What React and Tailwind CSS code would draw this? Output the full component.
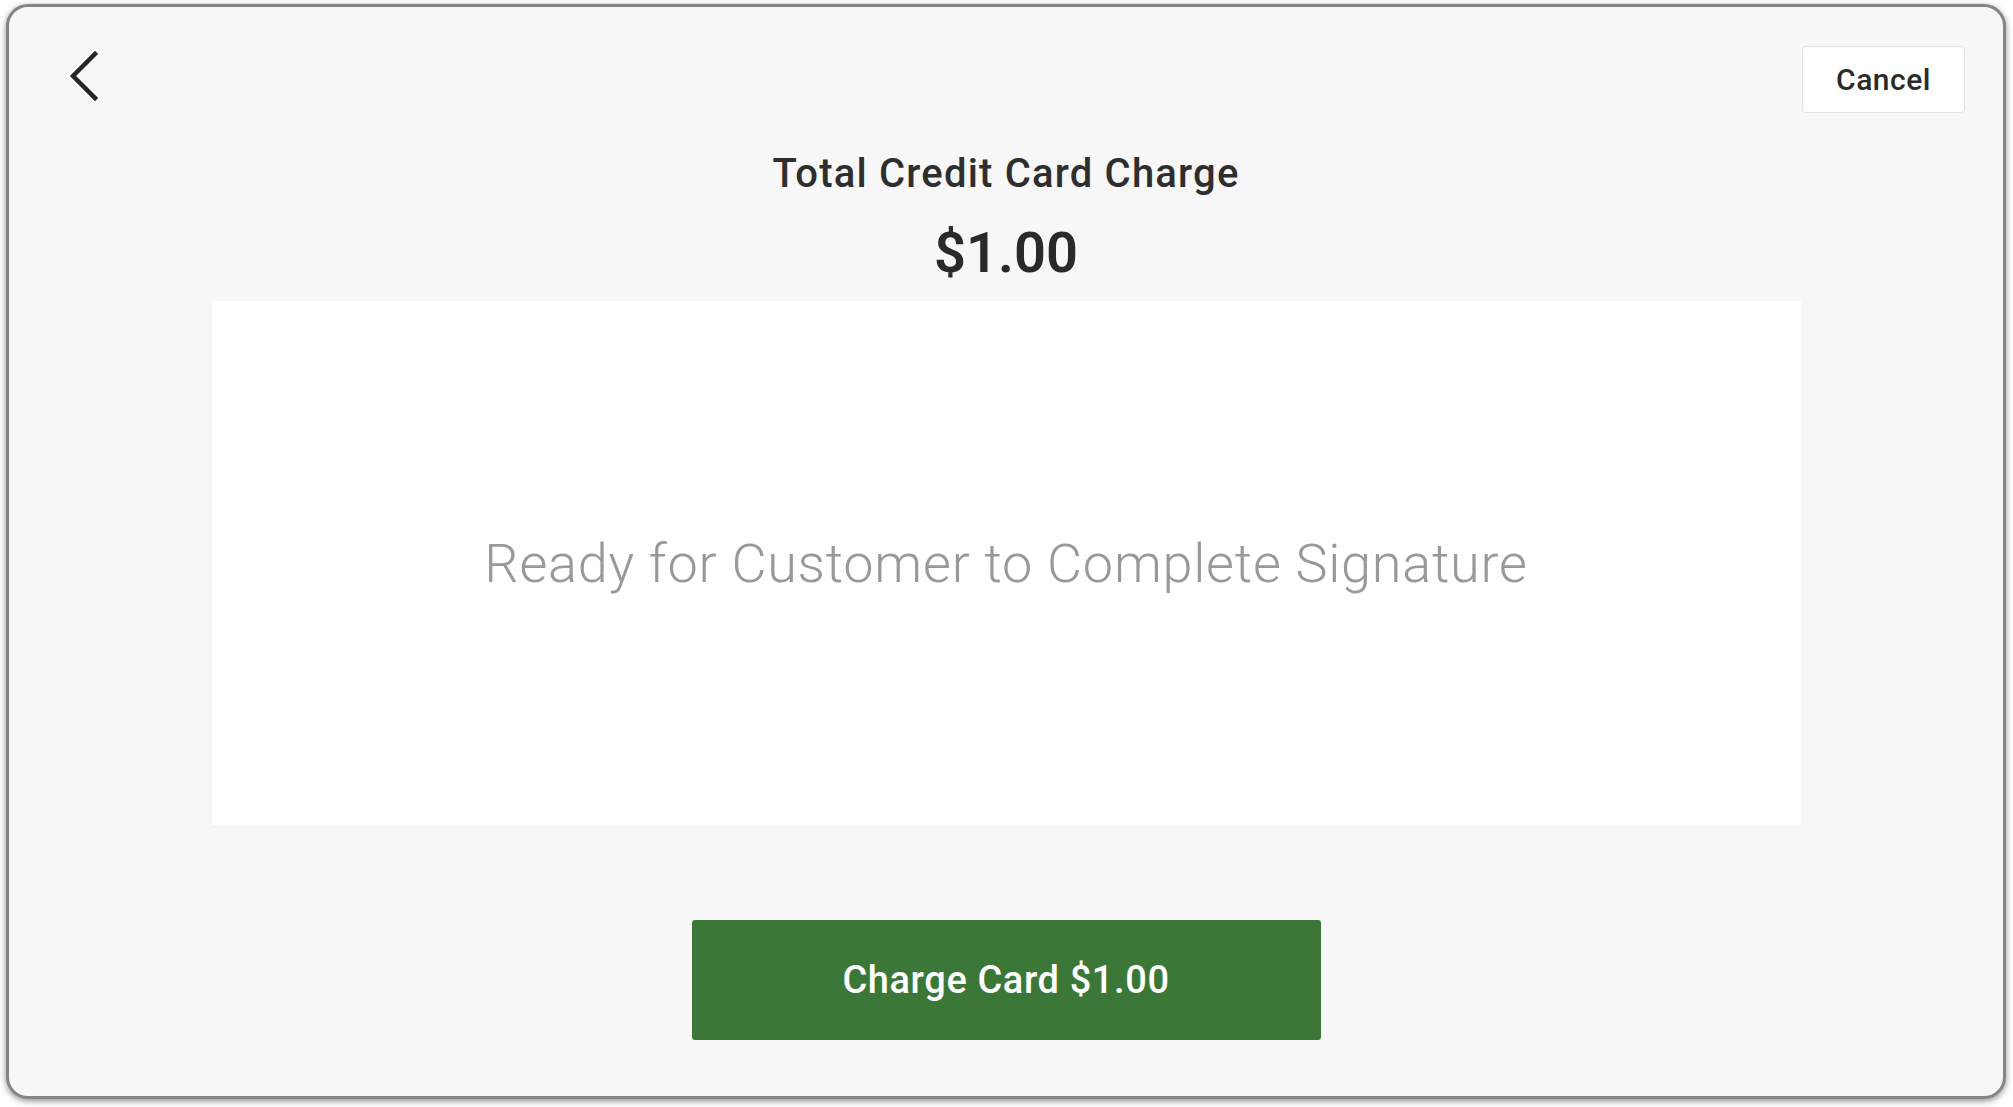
const font = { fontFamily: 'Roboto, "Noto Sans", sans-serif' };

const BackIcon = () => (
  <svg width="34" height="54" viewBox="0 0 34 54" fill="none">
    <path d="M29 4 L7 26 L29 48" stroke="#262626" strokeWidth="4.5" strokeLinecap="square" strokeLinejoin="miter" />
  </svg>
);

const App = () => {
  return (
    <div className="w-[2013px] h-[1107px] bg-white pl-[6px] pt-[4px]" style={font}>
      {/* window frame */}
      <div className="w-[2000px] h-[1095px] rounded-[22px] border-[3px] border-[#858585] bg-[#f7f7f7] shadow-[0_2px_6px_rgba(0,0,0,0.45)] flex flex-col items-center overflow-hidden">
        {/* header */}
        <div className="w-full flex justify-between items-start pl-[57px] pr-[38px] pt-[39px]">
          <button className="mt-[4px]">
            <BackIcon />
          </button>
          <button className="w-[163px] h-[67px] bg-white border border-[#e3e3e3] rounded-[4px] text-[30px] tracking-[0.5px] font-medium text-[#2b2b2b]">
            Cancel
          </button>
        </div>

        <h1 className="mt-[41px] text-[40px] leading-none tracking-[1.2px] font-medium text-[#2e2e2e]">
          Total Credit Card Charge
        </h1>
        <p className="mt-[31px] text-[56px] leading-none font-semibold text-[#2a2a2a]">
          $1.00
        </p>

        {/* signature area */}
        <div className="mt-[20px] w-[1589px] h-[526px] bg-white border-b border-[#efefef] flex items-center justify-center">
          <p className="text-[54px] tracking-[0.75px] font-light text-[#999999]">
            Ready for Customer to Complete Signature
          </p>
        </div>

        <button className="mt-[93px] w-[629px] h-[120px] bg-[#3b7837] rounded-[3px] text-white text-[38px] tracking-[0.6px] font-medium">
          Charge Card $1.00
        </button>
      </div>
    </div>
  );
};

export default App;
